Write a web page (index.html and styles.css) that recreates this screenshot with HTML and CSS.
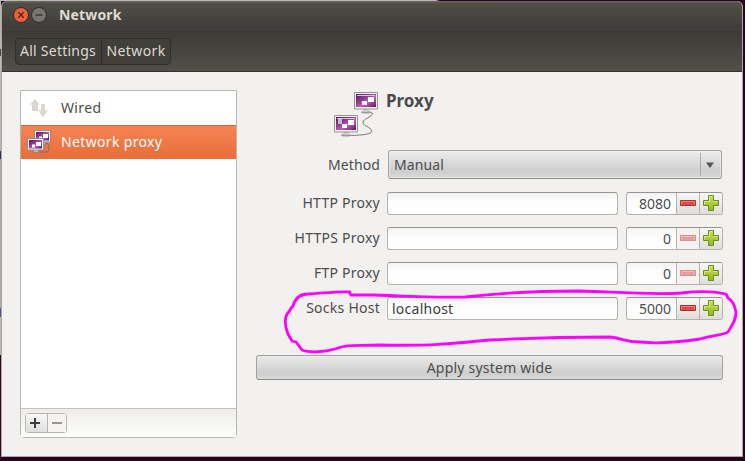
FILE: index.html
```html
<!DOCTYPE html>
<html lang="en">
<head>
<meta charset="utf-8">
<title>Network</title>
<link rel="stylesheet" href="styles.css">
</head>
<body>
<svg class="defs" width="0" height="0" aria-hidden="true">
  <defs>
    <linearGradient id="screen" x1="0" y1="0" x2="1" y2="1"><stop offset="0" stop-color="#571760"/><stop offset=".35" stop-color="#8b3a8d"/><stop offset=".6" stop-color="#bd62b2"/><stop offset="1" stop-color="#65105c"/></linearGradient>
    <linearGradient id="green" x1="0" y1="0" x2="0" y2="1"><stop offset="0" stop-color="#d3e04f"/><stop offset="1" stop-color="#93b51f"/></linearGradient>
    <symbol id="monitor" viewBox="0 0 24 22">
      <ellipse cx="12" cy="20.300" rx="5" ry="1.200" fill="#9a9a98"/>
      <path d="M9.500 17h5v3h-5z" fill="#c9c9c7"/>
      <path d="M.5.500h23v16.500H.5z" fill="#eee" stroke="#969696"/>
      <path d="M2 2h20v13H2z" fill="url(#screen)"/>
      <path d="M3 3h18v1H3z" fill="#d9c4dc"/>
      <path d="M14 5h6v5h-6zM8 9h5v4H8z" fill="#fff"/>
    </symbol>
    <symbol id="monitor-small" viewBox="0 0 17 15">
      <path d="M7 12h4v2H7z" fill="#ccc"/><path d="M4.500 14.300h8" stroke="#8b8b88" stroke-width="1.300"/>
      <path d="M.5.500h16v11.500H.5z" fill="#eee" stroke="#8f8f8c"/>
      <path d="M2 2h13v8.500H2z" fill="url(#screen)"/>
      <path d="M9 4h5v4H9zM5 6.500h3v3H5z" fill="#fff"/>
    </symbol>
    <symbol id="plus" viewBox="0 0 16 16"><path d="M5.500.5h5v5h5v5h-5v5h-5v-5h-5v-5h5z" fill="url(#green)" stroke="#5f9222"/><path d="M6.500 6.500v-5h3M1.500 9.500v-3h5M10 6.500h4.500" fill="none" stroke="#e3eb8c" stroke-width=".8"/></symbol>
    <symbol id="minus" viewBox="0 0 16 6"><path d="M.5.500h15v5H.5z" fill="#d94b48" stroke="#b42c2c"/><path d="M1.500 4.500v-3h13v3" fill="none" stroke="#e98580"/></symbol>
  </defs>
</svg>
<div class="window">
  <header class="header">
    <div class="titlebar">
      <svg class="controls" width="34" height="16" viewBox="0 0 34 16">
        <circle cx="8" cy="8" r="7.500" fill="#ea6137" stroke="#2f2e2a"/><path d="M5.300 5.300l5.400 5.400m0-5.400l-5.400 5.400" stroke="#52251a" stroke-width="1.300"/>
        <circle cx="26" cy="8" r="7.500" fill="#777670" stroke="#2f2e2a"/><path d="M22.500 8h7" stroke="#3a3934" stroke-width="1.300"/>
      </svg>
      <h1 class="title">Network</h1>
    </div>
    <nav class="toolbar"><div class="crumbs"><span class="crumb">All Settings</span><span class="crumb">Network</span></div></nav>
  </header>
  <main class="content">
    <aside class="sidebar">
      <ul class="devices">
        <li class="device"><svg class="device-icon" width="26" height="26" viewBox="0 0 26 26"><path d="M5 16V9.500H2.500L8 4l4.500 5.500H11V16zM14 9h4v6.500h3L16 22l-5-6.500h3z" fill="#dcd8cf"/></svg><span>Wired</span></li>
        <li class="device selected"><svg class="device-icon" width="26" height="26" viewBox="0 0 26 26"><path d="M17 15c5-1 6 1 4 3 2 3 1 5-3 5h-6" fill="none" stroke="#79695f"/><use href="#monitor-small" x="7" y="1" width="17" height="15"/><use href="#monitor-small" x="0" y="9" width="17" height="15"/></svg><span>Network proxy</span></li>
      </ul>
      <div class="actions"><div class="pair"><button class="act"><svg width="10" height="10"><path d="M5 0v10M0 5h10" stroke="#3d3d3d" stroke-width="2"/></svg></button><button class="act off"><svg width="10" height="10"><path d="M0 5h10" stroke="#999692" stroke-width="2"/></svg></button></div></div>
    </aside>
    <section class="panel">
      <div class="heading">
        <svg class="proxy-icon" width="48" height="48" viewBox="0 0 48 48"><path d="M33 20.500q12-1 5 4c-7 4-9 5-5 9 6 3 8 5 6 7-2 2-12 3-24 3" fill="none" stroke="#777"/><use href="#monitor" x="22" y="0" width="24" height="22"/><use href="#monitor" x="2" y="23" width="24" height="22"/><path d="M6 27h4v5H6z" fill="#d5b3d5"/></svg>
        <h2 class="proxy-title">Proxy</h2>
      </div>
      <div class="row method"><label class="label">Method</label><div class="combo"><span class="combo-text">Manual</span><span class="drop"><svg width="8" height="6"><path d="M0 .5h8L4 6z" fill="#555"/></svg></span></div></div>
      <div class="row"><label class="label">HTTP Proxy</label><div class="entry"></div><div class="spin"><span class="num">8080</span><span class="step"><svg width="16" height="6"><use href="#minus"/></svg></span><span class="step"><svg width="16" height="16"><use href="#plus"/></svg></span></div></div>
      <div class="row"><label class="label">HTTPS Proxy</label><div class="entry"></div><div class="spin"><span class="num">0</span><span class="step off"><svg width="16" height="6"><use href="#minus"/></svg></span><span class="step"><svg width="16" height="16"><use href="#plus"/></svg></span></div></div>
      <div class="row"><label class="label">FTP Proxy</label><div class="entry"></div><div class="spin"><span class="num">0</span><span class="step off"><svg width="16" height="6"><use href="#minus"/></svg></span><span class="step"><svg width="16" height="16"><use href="#plus"/></svg></span></div></div>
      <div class="row"><label class="label">Socks Host</label><div class="entry">localhost</div><div class="spin"><span class="num">5000</span><span class="step"><svg width="16" height="6"><use href="#minus"/></svg></span><span class="step"><svg width="16" height="16"><use href="#plus"/></svg></span></div></div>
      <button class="apply">Apply system wide</button>
    </section>
  </main>
</div>
<svg class="scribble" width="745" height="461" viewBox="0 0 745 461"><path d="M350 292C340 291 325 293 308 294C300 294 295 299 293 306C290 308 290 312 287 314C284 320 286 329 288 334L292 341L296 342L302 350C310 353 325 352 335 349C348 344 355 346 380 345C430 346 450 344 490 340C530 338 580 337 610 337C622 338 624 342 640 342C658 344 680 342 700 339C713 335 724 335 728 332C732 325 736 321 736 312C734 304 733 301 728 298L726 294C717 292 705 290 682 293C650 295 615 292 580 291C540 291 500 293 465 297C430 298 405 296 375 295L351 295L349 292"/></svg>
</body>
</html>
```
FILE: styles.css
```css
* { box-sizing: border-box; }
body { margin: 0; width: 745px; height: 461px; overflow: hidden; padding: 1px 2px 3px 1px; background: linear-gradient(90deg, #b8b8b8 58.500%, #25051d 59%) 0 0 / 745px 1px no-repeat, linear-gradient(#b8b8b8 0 49px, #51404d 49px 56px, #b8b8b8 56px 151px, #303063 151px 159px, #aaa 159px 308px, #4654a8 308px 317px, #b8b8b8 317px 355px, #300a24 355px) 0 0 / 1px 100% no-repeat, #25051d; font: 14px/20px "Noto Sans", sans-serif; letter-spacing: .25px; color: #4c4c4c; }
.defs { position: absolute; }
.window { height: 456px; display: flex; flex-direction: column; background: #f2f1ef; border: 1px solid #aaa89f; border-top: 0; border-radius: 6px 6px 0 0; overflow: hidden; }
.header { height: 71px; margin: 0 -1px; border-bottom: 1px solid #33322e; color: #dfdbd2; }
.titlebar { height: 28px; display: flex; align-items: center; padding: 0 0 0 12px; background: linear-gradient(#66645c 0, #66645c 1px, #504e47 2px, #3e3d39 100%); }
.title { font-size: 14px; line-height: 20px; margin: 0 0 0 12px; letter-spacing: .15px; }
.toolbar { height: 42px; padding: 8px 14px; border-top: 1px solid #484741; background: linear-gradient(#3b3a36, #524f47); }
.crumbs { display: flex; width: 156px; height: 27px; border: 1px solid #302f2b; border-radius: 4px; background: #403f3a; }
.crumb { padding: 2px 0 0 4px; width: 86px; white-space: nowrap; }
.crumb + .crumb { width: 69px; padding-left: 4px; border-left: 1px solid #302f2b; letter-spacing: .4px; }
.content { flex: 1; display: flex; padding: 18px 19px 19px 18px; }
.sidebar { flex: none; width: 217px; height: 348px; display: flex; flex-direction: column; border: 1px solid #b9b6b0; border-radius: 0 0 4px 4px; background: #fff; }
.devices { list-style: none; margin: 0; padding: 0; flex: 1; }
.device { height: 34px; display: flex; align-items: center; padding-left: 6px; white-space: nowrap; letter-spacing: .35px; }
.device-icon { margin-right: 8px; }
.selected { color: #fff; background: linear-gradient(#f58454, #e86d38); border-top: 1px solid #dd6734; padding-bottom: 2px; }
.actions { height: 29px; border-top: 1px solid #c4c1bb; padding: 4px; background: linear-gradient(#eeedeb, #fdfdfc); }
.pair { display: flex; width: 42px; height: 20px; border: 1px solid #b8b5b0; border-radius: 3px; }
.act { flex: 1; padding: 0 2px 0 0; border: 0; background: linear-gradient(#f8f8f8, #dedede); display: flex; align-items: center; justify-content: center; }
.act.off { padding: 0; border-left: 1px solid #b8b5b0; background: #f5f4f2; }
.panel { flex: none; width: 467px; margin-left: 19px; }
.heading { display: flex; height: 60px; padding-left: 76px; }
.proxy-icon { margin-top: 2px; }
.proxy-title { font-size: 17px; line-height: 22px; margin: 0 0 0 6px; letter-spacing: 0; }
.row { display: flex; height: 23px; margin-bottom: 12px; }
.label { width: 124px; margin-right: 7px; text-align: right; padding-top: 1px; white-space: nowrap; }
.row.method { height: 29px; margin-bottom: 13px; }
.method .label { padding-top: 5px; margin-right: 8px; letter-spacing: .1px; }
.combo { width: 334px; display: flex; align-items: center; justify-content: space-between; padding-left: 5px; border: 1px solid #a5a29e; border-bottom-color: #8d8b88; border-radius: 3px; background: linear-gradient(#ececec, #cdcdcd 75%, #dadada); box-shadow: inset 0 0 0 1px #ffffff60; }
.combo-text { letter-spacing: .1px; }
.drop { width: 21px; height: 23px; border-left: 1px solid #aaa; display: flex; align-items: center; justify-content: center; padding-right: 3px; }
.entry, .spin { border: 1px solid #b5b2ad; border-top-color: #99938e; border-radius: 3px; background: linear-gradient(#f3f3f3, #fdfdfd 40%, #fff); }
.entry { width: 231px; margin-right: 8px; padding: 1px 0 0 4px; color: #3c3c3c; }
.spin { width: 97px; display: flex; overflow: hidden; }
.num { flex: 1; text-align: right; padding: 1px 5px 0 0; letter-spacing: 0; }
.step { width: 23px; border-left: 1px solid #b5b2ad; display: flex; align-items: center; justify-content: center; padding-bottom: 1px; background: linear-gradient(#f7f7f7, #dedddc); }
.step.off { background: #f3f2f0; }
.step.off svg { opacity: .5; }
.apply { display: block; width: 467px; height: 25px; margin-top: 35px; padding: 0; font: inherit; letter-spacing: .22px; color: inherit; border: 1px solid #a5a29e; border-bottom-color: #8d8b88; border-radius: 3px; background: linear-gradient(#eaeaea, #cdcdcd 75%, #dadada); }
.scribble { position: absolute; left: 0; top: 0; fill: none; stroke: #ff00ff; stroke-width: 2.800; stroke-linejoin: round; stroke-linecap: round; }
```
